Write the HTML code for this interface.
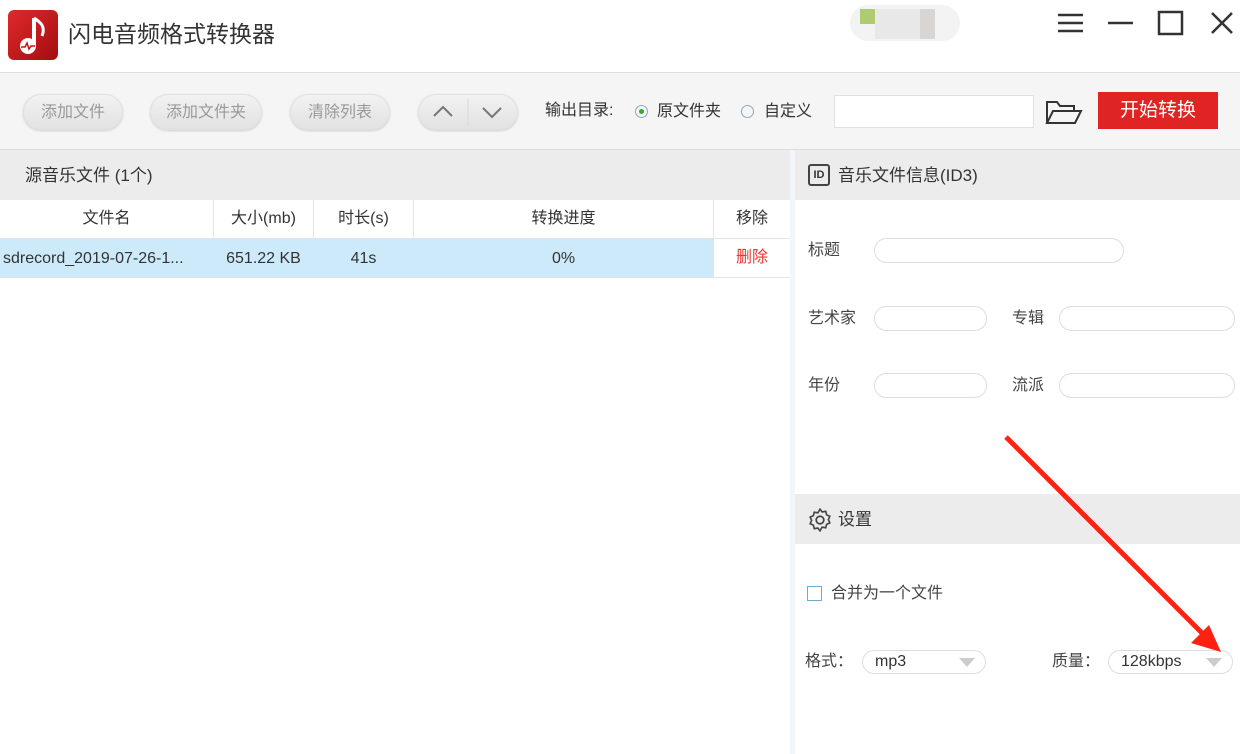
<!DOCTYPE html>
<html><head><meta charset="utf-8"><style>
*{margin:0;padding:0;box-sizing:border-box}
body{width:1240px;height:754px;overflow:hidden;background:#fff;font-family:"Liberation Sans","Noto Sans CJK SC",sans-serif;color:#333;position:relative}
.a{position:absolute}
.btn{position:absolute;top:94px;height:36px;border-radius:18px;background:linear-gradient(#f2f2f2,#e2e2e2);border:1px solid #e0e0e0;box-shadow:0 1px 2px #ccc;color:#999;font-size:16px;line-height:36px;text-align:center}
.th{position:absolute;top:200px;height:38px;line-height:38px;text-align:center;font-size:16px;border-right:1px solid #e4e4e4}
.td{position:absolute;top:239px;height:38px;line-height:38px;text-align:center;font-size:16px;border-right:1px solid #e4e4e4}
.lbl{position:absolute;font-size:16px;color:#444;line-height:1.15}
.inp{position:absolute;height:25px;border:1px solid #ddd;border-radius:13px;background:#fff}
</style></head><body>
<div class="a" style="left:8px;top:10px;width:50px;height:50px;border-radius:6px;background:linear-gradient(135deg,#e02a2a,#a30d12)">
<svg width="50" height="50" viewBox="0 0 50 50"><path d="M26 8v26" stroke="#fff" stroke-width="4"/><path d="M26 8c6 4 12 8 8 18" stroke="#fff" stroke-width="3" fill="none"/><circle cx="20" cy="36" r="8" fill="#fff"/><path d="M13 37h4l2-4 2 6 2-3h4" stroke="#c11" stroke-width="1.5" fill="none"/></svg></div>
<div class="a" style="left:68px;top:22px;font-size:23px;color:#333;line-height:1.1">闪电音频格式转换器</div>
<div class="a" style="left:850px;top:5px;width:110px;height:36px;border-radius:18px;background:#f3f3f3"></div>
<div class="a" style="left:860px;top:9px;width:15px;height:15px;background:#afcb6f"></div>
<div class="a" style="left:875px;top:9px;width:45px;height:30px;background:#e8e8e8"></div>
<div class="a" style="left:920px;top:9px;width:15px;height:30px;background:#d8d5d3"></div>
<svg class="a" style="left:1055px;top:10px" width="180" height="28"><g stroke="#333" stroke-width="2.5" fill="none"><path d="M3 5h25M3 13h25M3 21h25"/><path d="M53 13h25"/><rect x="104" y="2" width="23" height="22"/><path d="M157 3l20 20M177 3l-20 20"/></g></svg>
<div class="a" style="left:0;top:72px;width:1240px;height:78px;background:#f5f5f5;border-top:1px solid #ddd;border-bottom:1px solid #ddd"></div>
<div class="btn" style="left:23px;width:100px">添加文件</div>
<div class="btn" style="left:150px;width:112px">添加文件夹</div>
<div class="btn" style="left:290px;width:100px">清除列表</div>
<div class="btn" style="left:418px;width:100px"><svg width="98" height="34" style="position:absolute;left:0;top:0"><path d="M49 4v27" stroke="#d8d8d8"/><path d="M15 21l9-9 9 9M64 13l9 9 9-9" stroke="#777" stroke-width="2" fill="none"/></svg></div>
<div class="lbl" style="left:545px;top:102px;color:#333">输出目录:</div>
<div class="a" style="left:635px;top:105px;width:13px;height:13px;border:1px solid #8ab;border-radius:50%"><div style="margin:3px;width:5px;height:5px;border-radius:50%;background:#3a3"></div></div>
<div class="lbl" style="left:657px;top:103px;color:#333">原文件夹</div>
<div class="a" style="left:741px;top:105px;width:13px;height:13px;border:1px solid #8ab;border-radius:50%"></div>
<div class="lbl" style="left:764px;top:103px;color:#333">自定义</div>
<div class="a" style="left:834px;top:95px;width:200px;height:33px;background:#fff;border:1px solid #e0e0e0"></div>
<svg class="a" style="left:1045px;top:98px" width="38" height="28"><path d="M2 25V4h10l3 4h14v5M2 25l6-12h28l-6 12z" stroke="#333" stroke-width="2" fill="none"/></svg>
<div class="a" style="left:1098px;top:92px;width:120px;height:37px;background:#e02424;color:#fff;font-size:19px;line-height:37px;text-align:center">开始转换</div>
<div class="a" style="left:0;top:150px;width:790px;height:50px;background:#ececec"></div>
<div class="lbl" style="left:25px;top:166px;font-size:17px;color:#333">源音乐文件 (1个)</div>
<div class="a" style="left:790px;top:150px;width:5px;height:604px;background:#f2f6fb"></div>
<div class="th" style="left:0;width:214px">文件名</div>
<div class="th" style="left:214px;width:100px">大小(mb)</div>
<div class="th" style="left:314px;width:100px">时长(s)</div>
<div class="th" style="left:414px;width:300px">转换进度</div>
<div class="th" style="left:714px;width:76px;border:none">移除</div>
<div class="a" style="left:0;top:238px;width:790px;height:40px;background:#cdeafb;border-top:1px solid #e4e4e4;border-bottom:1px solid #e4e4e4"></div>
<div class="td" style="left:0;width:214px;text-align:left;padding-left:3px;top:240px">sdrecord_2019-07-26-1...</div>
<div class="td" style="left:214px;width:100px;top:240px">651.22 KB</div>
<div class="td" style="left:314px;width:100px;top:240px">41s</div>
<div class="td" style="left:414px;width:300px;top:240px">0%</div>
<div class="td" style="left:714px;width:76px;background:#fff;color:#e33;border:none">删除</div>
<div class="a" style="left:795px;top:150px;width:445px;height:50px;background:#ececec"></div>
<div class="a" style="left:808px;top:164px;width:22px;height:22px;border:2px solid #444;border-radius:3px;font-size:11px;font-weight:bold;text-align:center;line-height:18px;color:#333">ID</div>
<div class="lbl" style="left:838px;top:166px;font-size:17px;color:#333">音乐文件信息(ID3)</div>
<div class="lbl" style="left:808px;top:242px">标题</div><div class="inp" style="left:874px;top:238px;width:250px"></div>
<div class="lbl" style="left:808px;top:310px">艺术家</div><div class="inp" style="left:874px;top:306px;width:113px"></div>
<div class="lbl" style="left:1012px;top:310px">专辑</div><div class="inp" style="left:1059px;top:306px;width:176px"></div>
<div class="lbl" style="left:808px;top:377px">年份</div><div class="inp" style="left:874px;top:373px;width:113px"></div>
<div class="lbl" style="left:1012px;top:377px">流派</div><div class="inp" style="left:1059px;top:373px;width:176px"></div>
<div class="a" style="left:795px;top:494px;width:445px;height:50px;background:#ececec"></div>
<svg class="a" style="left:807px;top:507px" width="26" height="26" viewBox="0 0 24 24"><circle cx="12" cy="12" r="3.5" stroke="#444" stroke-width="1.6" fill="none"/><path d="M12 2l2 2.6 3.3-.6.8 3.2 3 1.4-1.4 3 1.4 3-3 1.4-.8 3.2-3.3-.6L12 22l-2-2.6-3.3.6-.8-3.2-3-1.4 1.4-3-1.4-3 3-1.4.8-3.2 3.3.6z" stroke="#444" stroke-width="1.5" fill="none"/></svg>
<div class="lbl" style="left:838px;top:510px;font-size:17px;color:#333">设置</div>
<div class="a" style="left:807px;top:586px;width:15px;height:15px;border:1.5px solid #6aaad8"></div>
<div class="lbl" style="left:831px;top:585px">合并为一个文件</div>
<div class="lbl" style="left:805px;top:653px">格式：</div>
<div class="inp" style="left:862px;top:650px;width:124px;height:24px;font-size:16px;padding-left:12px;line-height:22px">mp3<span style="position:absolute;right:10px;top:7px;border:8px solid transparent;border-top:9px solid #ccc;border-bottom:0"></span></div>
<div class="lbl" style="left:1052px;top:653px">质量：</div>
<div class="inp" style="left:1108px;top:650px;width:125px;height:24px;font-size:16px;padding-left:12px;line-height:22px">128kbps<span style="position:absolute;right:10px;top:7px;border:8px solid transparent;border-top:9px solid #ccc;border-bottom:0"></span></div>
<svg class="a" style="left:0;top:0" width="1240" height="754"><path d="M1006 437L1205 636" stroke="#f21" stroke-width="5"/><path d="M1221 652l-30-9 18-18z" fill="#f21"/></svg>
</body></html>
